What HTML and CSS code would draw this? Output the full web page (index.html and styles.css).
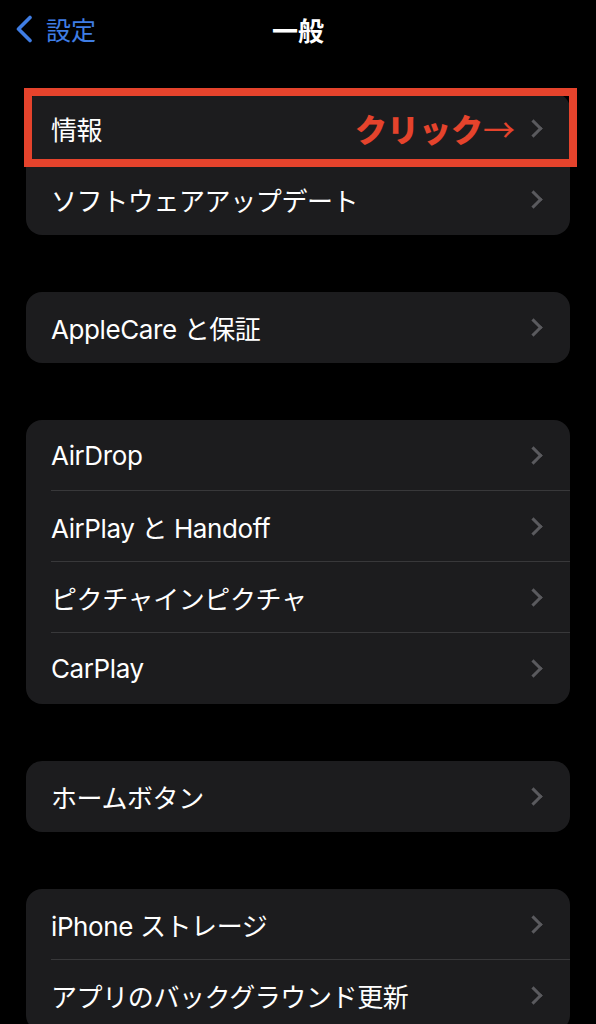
FILE: index.html
```html
<!DOCTYPE html>
<html lang="ja">
<head>
  <meta charset="UTF-8" />
  <meta name="viewport" content="width=device-width, initial-scale=1" />
  <title>一般</title>
  <link rel="stylesheet" href="styles.css">
</head>
<body>
  <div class="nav">
    <a class="back" href="#">
      <svg class="back-icon" width="18" height="28" viewBox="0 0 18 28">
        <path d="M15 2.5 L3.5 14 L15 25.5" fill="none" stroke="currentColor" stroke-width="3.6" stroke-linecap="round" stroke-linejoin="round" />
      </svg>
      <span>設定</span>
    </a>
    <h1 class="title">一般</h1>
    <div></div>
  </div>

  <div class="settings">
    <div class="group">
      <div class="highlight"></div>
      <div class="row">
        <div class="row-body">
          <span class="label">情報</span>
          <span class="right">
            <span class="note">クリック<span class="arrow">→</span></span>
            <span class="chevron"></span>
          </span>
        </div>
      </div>
      <div class="row">
        <div class="row-body">
          <span class="label">ソフトウェアアップデート</span>
          <span class="chevron"></span>
        </div>
      </div>
    </div>

    <div class="group">
      <div class="row">
        <div class="row-body">
          <span class="label">AppleCare と保証</span>
          <span class="chevron"></span>
        </div>
      </div>
    </div>

    <div class="group">
      <div class="row">
        <div class="row-body">
          <span class="label">AirDrop</span>
          <span class="chevron"></span>
        </div>
      </div>
      <div class="row">
        <div class="row-body">
          <span class="label">AirPlay と Handoff</span>
          <span class="chevron"></span>
        </div>
      </div>
      <div class="row">
        <div class="row-body">
          <span class="label">ピクチャインピクチャ</span>
          <span class="chevron"></span>
        </div>
      </div>
      <div class="row">
        <div class="row-body">
          <span class="label">CarPlay</span>
          <span class="chevron"></span>
        </div>
      </div>
    </div>

    <div class="group">
      <div class="row">
        <div class="row-body">
          <span class="label">ホームボタン</span>
          <span class="chevron"></span>
        </div>
      </div>
    </div>

    <div class="group">
      <div class="row">
        <div class="row-body">
          <span class="label">iPhone ストレージ</span>
          <span class="chevron"></span>
        </div>
      </div>
      <div class="row">
        <div class="row-body">
          <span class="label">アプリのバックグラウンド更新</span>
          <span class="chevron"></span>
        </div>
      </div>
    </div>
  </div>
</body>
</html>
```

FILE: styles.css
```css
body {
  margin: 0;
  background: #000;
  color: #fff;
  font-family: Inter, "Noto Sans CJK JP", sans-serif;
}

.nav {
  display: grid;
  grid-template-columns: 1fr auto 1fr;
  align-items: center;
  height: 58px;
}
.back {
  display: flex;
  align-items: center;
  gap: 13px;
  padding-left: 15px;
  color: #3f7de4;
  text-decoration: none;
  font-size: 25px;
}
.back-icon {
  display: block;
}
.title {
  margin: 0;
  font-size: 26px;
  font-weight: 700;
}

.settings {
  padding: 35px 26px 0;
}
.group {
  position: relative;
  background: #1c1c1e;
  border-radius: 16px;
  margin-bottom: 57px;
}
.row {
  padding-left: 25px;
}
.row-body {
  display: flex;
  align-items: center;
  justify-content: space-between;
  height: 71px;
  padding-right: 28px;
  border-bottom: 1px solid #38383a;
  box-sizing: border-box;
}
.row:last-child .row-body {
  border-bottom: none;
}
.label {
  font-size: 26px;
  letter-spacing: -0.4px;
}
.right {
  display: flex;
  align-items: center;
}
.chevron {
  width: 10px;
  height: 10px;
  border-top: 3px solid #5a5a5e;
  border-right: 3px solid #5a5a5e;
  transform: rotate(45deg);
  margin-right: 2px;
}

/* 赤枠の注釈 */
.highlight {
  position: absolute;
  top: -5px;
  left: -2px;
  right: -7px;
  height: 79px;
  border: 8px solid #e5432c;
  box-sizing: border-box;
}
.note {
  color: #e5432c;
  font-family: "Noto Sans CJK JP", sans-serif;
  font-size: 32px;
  font-weight: 900;
  line-height: 1;
  margin-right: 12px;
}
.arrow {
  font-weight: 400;
}
```
